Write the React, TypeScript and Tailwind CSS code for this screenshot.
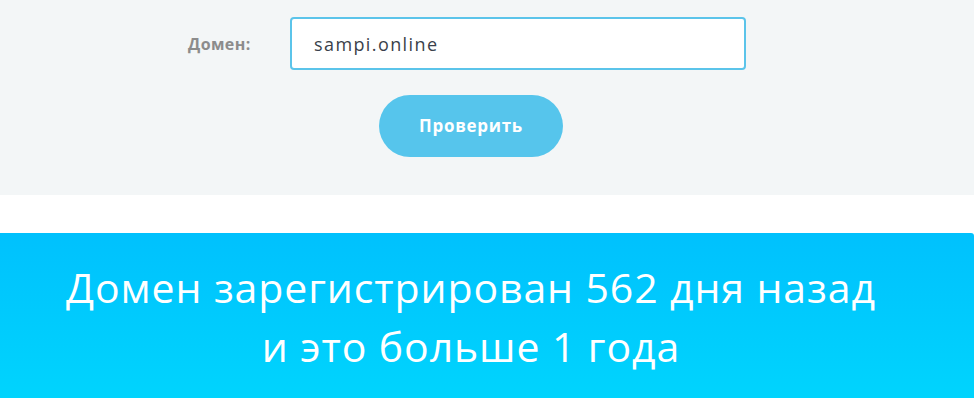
export default function App() {
    return (
        <main className="w-[974px] h-[398px] overflow-hidden bg-white font-['Open_Sans',sans-serif]">
            <section className="h-[195px] bg-[#f3f6f7] pt-[17px]">
                <div className="flex items-center">
                    <label className="w-[290px] pl-[188px] text-[16px] tracking-[0.4px] font-bold text-[#8c8c8c]">Домен:</label>
                    <input
                        defaultValue="sampi.online"
                        spellCheck={false}
                        className="w-[456px] h-[53px] rounded-[4px] border-2 border-[#5bc4ea] bg-white pl-[22px] text-[18px] tracking-[1.4px] text-[#3a3f4a] outline-none"
                    />
                </div>
                <div className="flex justify-center pr-[32px] mt-[25px]">
                    <button className="w-[184px] h-[62px] rounded-full bg-[#56c5ec] text-white text-[17px] tracking-[0.7px] font-bold">
                        Проверить
                    </button>
                </div>
            </section>
            <section className="h-[38px] bg-white" />
            <section className="h-[165px] rounded-tr-[3px] bg-gradient-to-b from-[#00c1fd] to-[#00d4fd] pt-[25px] pr-[32px] text-center text-white">
                <h2 className="text-[41px] font-normal leading-[59px] tracking-[0.9px]">
                    Домен зарегистрирован 562 дня назад
                    <br />
                    и это больше 1 года
                </h2>
            </section>
        </main>
    )
}
